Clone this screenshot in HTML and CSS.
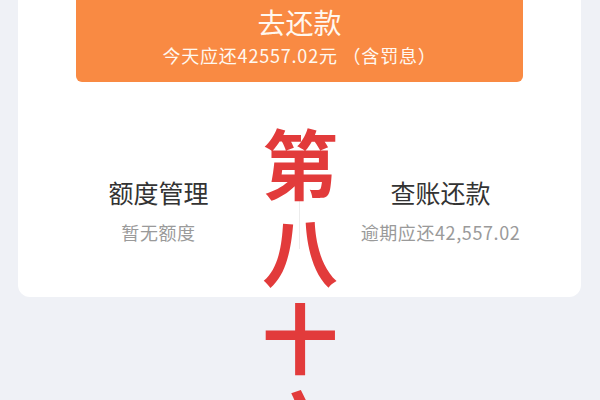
FILE: index.html
```html
<!DOCTYPE html>
<html lang="zh_CN">

<head>
  <meta charset="UTF-8">
  <meta name="viewport" content="width=device-width, initial-scale=1.0">
  <title>还款</title>
  <link rel="stylesheet" href="styles.css">
</head>

<body>
  <div class="card">
    <div class="pay-btn">
      <div class="pay-title">去还款</div>
      <div class="pay-sub">今天应还42557.02元 （含罚息）</div>
    </div>
    <div class="entry-list">
      <div class="entry">
        <div class="entry-title">额度管理</div>
        <div class="entry-sub">暂无额度</div>
      </div>
      <div class="divider"></div>
      <div class="entry">
        <div class="entry-title">查账还款</div>
        <div class="entry-sub">逾期应还42,557.02</div>
      </div>
    </div>
  </div>

  <!-- 竖排水印 -->
  <div class="stamp">第八十六</div>
</body>

</html>
```

FILE: styles.css
```css
* {
  margin: 0;
  padding: 0;
}

body {
  width: 600px;
  height: 400px;
  overflow: hidden;
  background-color: #eff1f6;
  font-family: "Noto Sans CJK SC", "Noto Sans", sans-serif;
  position: relative;
}

.card {
  margin: 0 19px 0 18px;
  height: 297px;
  background-color: #fff;
  border-radius: 0 0 12px 12px;
  padding: 0 58px;
  box-sizing: border-box;
}

.pay-btn {
  height: 82px;
  background-color: #f98a43;
  border-radius: 0 0 6px 6px;
  color: #fff8f0;
  text-align: center;
  box-sizing: border-box;
  padding-top: 3px;
}

.pay-title {
  font-size: 28px;
  line-height: 38px;
}

.pay-sub {
  font-size: 18px;
  line-height: 24px;
  letter-spacing: 0.8px;
  margin-top: 2px;
}

.entry-list {
  display: flex;
  align-items: center;
  margin: 87px -58px 0;
}

.entry {
  flex: 1;
  text-align: center;
}

.divider {
  width: 1px;
  height: 80px;
  background-color: #ececec;
}

.entry-title {
  font-size: 25px;
  line-height: 34px;
  color: #333;
}

.entry-sub {
  font-size: 18px;
  line-height: 24px;
  letter-spacing: 0.6px;
  color: #9a9a9a;
  margin-top: 11px;
}

.stamp {
  position: absolute;
  top: 118px;
  left: 262px;
  width: 76px;
  font-size: 76px;
  line-height: 87px;
  font-weight: bold;
  color: #e23b3b;
  text-align: center;
  word-break: break-all;
}
```
